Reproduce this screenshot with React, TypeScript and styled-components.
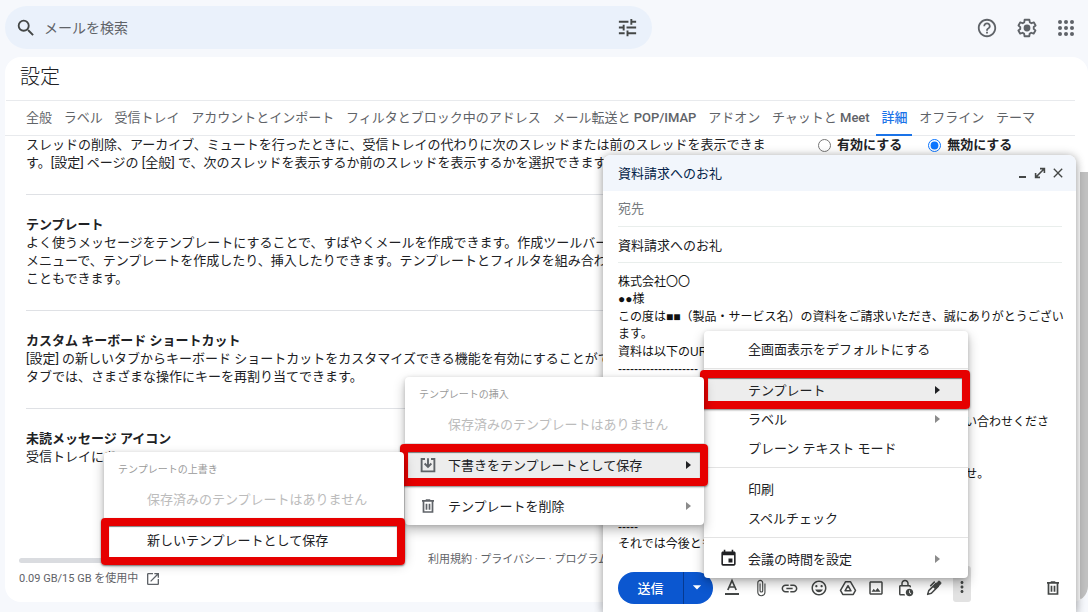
import React from "react";
import styled, { createGlobalStyle, css } from "styled-components";
import {
  MdArrowDropDown,
  MdAttachFile,
  MdClose,
  MdEvent,
  MdHelpOutline,
  MdLink,
  MdMoreVert,
  MdOpenInNew,
  MdOutlineImage,
  MdOutlineInsertEmoticon,
  MdOutlineLockClock,
  MdSearch,
  MdTune,
} from "react-icons/md";

const sans = `Roboto, "Noto Sans CJK JP", sans-serif`;
const mailSans = `"Liberation Sans", "Noto Sans CJK JP", sans-serif`;

const GlobalStyle = createGlobalStyle`
  *, *::before, *::after { box-sizing: border-box; }
  body { margin: 0; background: #f6f8fc; font-family: ${sans}; color: #202124; }
  button, input { font-family: inherit; }
  button { cursor: pointer; }
`;

const Page = styled.div`
  position: relative;
  display: flex;
  flex-direction: column;
  min-height: 100vh;
  padding: 0 0 10px 5px;
  overflow: hidden;
  font-size: 13px;
`;

/* ---------- top bar ---------- */

const TopBar = styled.header`
  display: flex;
  align-items: center;
  padding: 6px 0 8px;
`;

const SearchBox = styled.form`
  flex: 1;
  display: flex;
  align-items: center;
  gap: 7px;
  height: 43px;
  padding: 0 13px 0 10px;
  border-radius: 22px;
  background: #eaf1fb;
`;

const SearchInput = styled.input`
  flex: 1;
  min-width: 0;
  padding: 1px 0 0;
  border: 0;
  outline: 0;
  background: none;
  color: #202124;
  font-size: 14px;
  &::placeholder { color: #5f6368; opacity: 1; }
`;

const IconButton = styled.button`
  display: flex;
  align-items: center;
  justify-content: center;
  padding: 0;
  border: 0;
  background: none;
  color: #444746;
`;

const TopActions = styled.div`
  flex: 0 0 436px;
  display: flex;
  justify-content: flex-end;
  gap: 18px;
  padding-right: 10px;
  button { color: #5f6368; }
`;

/* ---------- settings panel ---------- */

const Panel = styled.main`
  position: relative;
  flex: 1;
  display: flex;
  flex-direction: column;
  border-radius: 16px;
  background: #fff;
  overflow: hidden;
  &::after {
    content: "";
    position: absolute;
    top: 115px;
    right: 0;
    bottom: 1px;
    width: 8px;
    border-radius: 0 0 8px 8px;
    background: #c1c1c1;
  }
`;

const PanelTitle = styled.h1`
  margin: 0 13px 0 1px;
  padding: 5px 14px 8px;
  border-bottom: 1px solid #e8eaed;
  font-size: 20px;
  font-weight: 300;
  line-height: 30px;
`;

const Tabs = styled.nav`
  display: flex;
  justify-content: space-between;
  margin-right: 13px;
  padding: 0 35px 0 16px;
  border-bottom: 1px solid #e8eaed;
`;

const Tab = styled.a<{ $active?: boolean }>`
  height: 35px;
  margin-bottom: -1px;
  padding: 0 5px;
  border-bottom: 2px solid ${(p) => (p.$active ? "#1a73e8" : "transparent")};
  color: ${(p) => (p.$active ? "#1a73e8" : "#5f6368")};
  font-weight: ${(p) => (p.$active ? 500 : 400)};
  line-height: 33px;
  text-decoration: none;
  white-space: nowrap;
  b { font-weight: 500; }
`;

const Sections = styled.div`
  margin: 0 26px 0 21px;
`;

const Section = styled.section`
  display: flex;
  padding: 21px 0 22px;
  line-height: 18px;
  white-space: nowrap;
  & + & { border-top: 1px solid #dfe1e5; }
  &:first-child { padding-top: 0; }
  &:last-child { padding-bottom: 0; }
`;

const SectionText = styled.div`
  flex: 1;
  min-width: 0;
  h2 { margin: 0; font-size: 13px; font-weight: 700; line-height: 18px; }
  p { margin: 0; }
`;

const Choices = styled.div`
  flex: 0 0 244px;
  display: flex;
  gap: 26px;
  align-self: flex-start;
`;

const Choice = styled.label`
  display: flex;
  align-items: center;
  gap: 6px;
  font-weight: 700;
  input { width: 13px; height: 13px; margin: 0; accent-color: #0b75ff; }
`;

const Footer = styled.footer`
  display: flex;
  margin-top: auto;
  padding: 0 14px 14px;
  color: #5f6368;
  font-size: 11px;
  line-height: 18px;
`;

const Storage = styled.div`
  flex: 0 0 409px;
  p { display: flex; align-items: center; gap: 7px; margin: 7px 0 0; }
`;

const StorageBar = styled.div`
  width: 200px;
  height: 5px;
  margin-top: 7px;
  border-radius: 3px;
  background: #dadce0;
`;

/* ---------- compose window ---------- */

const Compose = styled.section`
  position: absolute;
  right: 12px;
  bottom: 0;
  width: 473px;
  border-radius: 8px 8px 0 0;
  background: #fff;
  box-shadow: 0 4px 10px rgba(0, 0, 0, 0.2), 0 0 10px rgba(0, 0, 0, 0.25);
`;

const ComposeHeader = styled.header`
  display: flex;
  align-items: center;
  justify-content: space-between;
  height: 36px;
  padding: 0 10px 1px 15px;
  border-radius: 8px 8px 0 0;
  background: #f2f6fc;
  h2 { margin: 0; color: #041e49; font-size: 13px; font-weight: 400; }
`;

const WindowButtons = styled.div`
  display: flex;
  gap: 2px;
`;

const Field = styled.input`
  display: block;
  width: calc(100% - 29px);
  height: 36px;
  margin: 0 14px 0 15px;
  padding: 0 0 1px;
  border: 0;
  border-bottom: 1px solid #e9eeec;
  outline: 0;
  background: none;
  color: #202124;
  font-size: 13px;
  &::placeholder { color: #777b7e; opacity: 1; }
`;

const Message = styled.div`
  padding: 11px 15px 18px;
  outline: 0;
  color: #111;
  font-family: ${mailSans};
  font-size: 12px;
  line-height: 17px;
  white-space: nowrap;
  p { margin: 0 0 1px; }
`;

const ComposeBar = styled.div`
  display: flex;
  align-items: center;
  height: 32px;
  margin: 0 13px 8px 15px;
`;

const SendGroup = styled.div`
  display: flex;
  border-radius: 16px;
  overflow: hidden;
`;

const SendPart = styled.button<{ $split?: boolean }>`
  display: flex;
  align-items: center;
  justify-content: center;
  width: ${(p) => (p.$split ? 30 : 65)}px;
  height: 32px;
  padding: 0 ${(p) => (p.$split ? 3 : 0)}px 2px 0;
  border: 0;
  border-left: ${(p) => (p.$split ? "1px solid #063a91" : "0")};
  background: #0b57d0;
  color: #fff;
  font-size: 13px;
  font-weight: 500;
`;

const Tools = styled.div`
  flex: 1;
  display: flex;
  justify-content: space-between;
  margin: 0 72px 0 9px;
`;

const Tool = styled(IconButton)<{ $open?: boolean }>`
  width: 20px;
  height: 20px;
  ${(p) =>
    p.$open &&
    css`
      width: 18px;
      height: 36px;
      margin: -12px 0 -6px;
      padding-top: 6px;
      border-radius: 3px;
      background: #e2e2e2;
    `}
`;

/* ---------- menus ---------- */

const Menu = styled.div<{ $left: number; $bottom: number; $width: number; $level: number }>`
  position: absolute;
  left: ${(p) => p.$left}px;
  bottom: ${(p) => p.$bottom}px;
  z-index: ${(p) => p.$level};
  width: ${(p) => p.$width}px;
  padding: 3px 0 5px;
  border-radius: 4px;
  background: #fff;
  box-shadow: 0 5px 12px rgba(0, 0, 0, 0.28), 0 1px 4px rgba(0, 0, 0, 0.15);
`;

const MenuCaption = styled.div`
  height: 29px;
  padding-left: 14px;
  color: #9a9a9a;
  font-size: 10px;
  line-height: 30px;
`;

const MenuDivider = styled.hr`
  height: 1px;
  margin: 5px 0 6px;
  border: 0;
  background: #e3e3e3;
`;

const MenuItem = styled.button<{ $lit?: boolean }>`
  position: relative;
  display: flex;
  align-items: center;
  width: 100%;
  height: 29px;
  padding: 0 11px 0 0;
  border: 0;
  background: ${(p) => (p.$lit ? "#ededed" : "none")};
  color: #202124;
  font-size: 13px;
  text-align: left;
  white-space: nowrap;
  &:disabled { color: #bcbcbc; }
`;

const MenuIcon = styled.span<{ $wide?: boolean }>`
  flex: none;
  display: flex;
  justify-content: ${(p) => (p.$wide ? "flex-start" : "center")};
  width: ${(p) => (p.$wide ? 44 : 43)}px;
  padding-left: ${(p) => (p.$wide ? 15 : 2)}px;
  color: #5f6368;
`;

const MenuText = styled.span`
  flex: 1;
`;

const Arrow = styled.i<{ $strong?: boolean; $indent: number }>`
  width: 0;
  height: 0;
  margin-right: ${(p) => p.$indent}px;
  border: 4px solid transparent;
  border-right: 0;
  border-left: 5px solid ${(p) => (p.$strong ? "#202124" : "#8b8b8b")};
`;

const Marker = styled.span<{ $inset: string }>`
  position: absolute;
  inset: ${(p) => p.$inset};
  border: 8px solid #e60000;
  border-radius: 4px;
  box-shadow: 0 1px 2px rgba(0, 0, 0, 0.5), inset 0 1px 1px rgba(0, 0, 0, 0.5);
  pointer-events: none;
`;

/* ---------- drawn icons ---------- */

const GearIcon = () => (
  <svg width="22" height="22" viewBox="0 0 24 24" fill="none" stroke="currentColor" strokeWidth="2" strokeLinejoin="round">
    <path d="M19.300 13c.1-.7.1-1.300 0-2l2.100-1.700-2-3.500-2.600 1c-.5-.4-1.100-.8-1.700-1L14.600 3H9.400L9 5.800c-.6.2-1.200.6-1.700 1l-2.600-1-2 3.500L4.700 11c-.1.7-.1 1.300 0 2l-2.100 1.700 2 3.500 2.600-1c.5.4 1.100.8 1.700 1l.4 2.800h5.200l.4-2.800c.6-.2 1.200-.6 1.700-1l2.600 1 2-3.500z" />
    <circle cx="12" cy="12" r="3.700" fill="currentColor" stroke="none" />
  </svg>
);

const AppsIcon = () => (
  <svg width="22" height="22" viewBox="0 0 22 22" fill="currentColor">
    {[5, 11, 17].map((y) => [5, 11, 17].map((x) => <circle key={`${x}-${y}`} cx={x - 1} cy={y} r="2" />))}
  </svg>
);

const ExpandIcon = () => (
  <svg width="16" height="16" viewBox="0 0 16 16" fill="none" stroke="currentColor" strokeWidth="1.600">
    <path d="M4 12l8-8M8 3.600h4.400V8M8 12.400H3.600V8" />
  </svg>
);

const MinimizeIcon = () => (
  <svg width="16" height="16" viewBox="0 0 16 16">
    <path d="M5 11h7v2H5z" fill="currentColor" />
  </svg>
);

const TextStyleIcon = () => (
  <svg width="18" height="20" viewBox="0 0 18 20" fill="none" stroke="currentColor">
    <path d="M4.800 12L9 2.500 13.200 12M6.300 9h5.400" strokeWidth="1.700" />
    <path d="M2 16h14" strokeWidth="2" />
  </svg>
);

const DriveIcon = () => (
  <svg width="18" height="18" viewBox="0 0 24 24" fill="none" stroke="currentColor" strokeWidth="2" strokeLinejoin="round">
    <path d="M8.800 3.500h6.400L22 15.200 19 20.500H5L2 15.200z" />
    <path d="M12 9l4 6.800H8z" />
  </svg>
);

const PenIcon = () => (
  <svg width="18" height="18" viewBox="0 0 24 24" fill="none" stroke="currentColor" strokeLinejoin="round">
    <path d="M3.500 20.500l1.500-5L14.500 6.200l3.300 3.300L8.500 19z" strokeWidth="2" />
    <path d="M10.500 10.200L17.500 3.200c1.500-1.500 5 1.700 3.400 3.400L14 13.500z" fill="currentColor" strokeWidth="1" />
    <path d="M13 3.500L7 9.500" strokeWidth="2" />
  </svg>
);

const TrashIcon = () => (
  <svg width="18" height="18" viewBox="0 0 24 24" fill="none" stroke="currentColor" strokeWidth="2.300">
    <path d="M4 5.200h16M9 4h6M6 5.500v14.500h12V5.500M10 9v8M14 9v8" />
  </svg>
);

const SaveIcon = () => (
  <svg width="18" height="18" viewBox="0 0 24 24" fill="none" stroke="currentColor" strokeWidth="2.500">
    <path d="M8 4H3.500v16.500h17V4H16M12 3v11M7.500 10l4.500 4.500 4.500-4.500" />
  </svg>
);

/* ---------- content ---------- */

const tabs: { label: string; latin?: string; active?: boolean }[] = [
  { label: "全般" },
  { label: "ラベル" },
  { label: "受信トレイ" },
  { label: "アカウントとインポート" },
  { label: "フィルタとブロック中のアドレス" },
  { label: "メール転送と ", latin: "POP/IMAP" },
  { label: "アドオン" },
  { label: "チャットと ", latin: "Meet" },
  { label: "詳細", active: true },
  { label: "オフライン" },
  { label: "テーマ" },
];

const sections = [
  {
    title: "テンプレート",
    lines: [
      "よく使うメッセージをテンプレートにすることで、すばやくメールを作成できます。作成ツールバーの",
      "メニューで、テンプレートを作成したり、挿入したりできます。テンプレートとフィルタを組み合わせ",
      "こともできます。",
    ],
  },
  {
    title: "カスタム キーボード ショートカット",
    lines: [
      "[設定] の新しいタブからキーボード ショートカットをカスタマイズできる機能を有効にすることができ",
      "タブでは、さまざまな操作にキーを再割り当てできます。",
    ],
  },
  { title: "未読メッセージ アイコン", lines: ["受信トレイにあ"] },
];

const message = [
  ["株式会社〇〇", "●●様"],
  ["この度は■■（製品・サービス名）の資料をご請求いただき、誠にありがとうござい", "ます。"],
  ["資料は以下のURL", "--------------------"],
  ["", ""],
  ["資料内容について、ご不明な点がございましたら、お気軽にお問い合わせくださ", "い。"],
  ["", "送付資料のご案内と、製品・サービスに関する最新情報のお知らせ。"],
  ["", ""],
  ["-----", "それでは今後とも"],
];

export default function App() {
  return (
    <Page>
      <GlobalStyle />
      <TopBar>
        <SearchBox role="search">
          <IconButton type="button" aria-label="検索"><MdSearch size={22} /></IconButton>
          <SearchInput aria-label="メールを検索" placeholder="メールを検索" />
          <IconButton type="button" aria-label="検索オプション"><MdTune size={23} /></IconButton>
        </SearchBox>
        <TopActions>
          <IconButton aria-label="サポート"><MdHelpOutline size={22} /></IconButton>
          <IconButton aria-label="設定"><GearIcon /></IconButton>
          <IconButton aria-label="アプリ"><AppsIcon /></IconButton>
        </TopActions>
      </TopBar>

      <Panel>
        <PanelTitle>設定</PanelTitle>
        <Tabs>
          {tabs.map((t) => (
            <Tab key={t.label} href="#" $active={t.active}>
              {t.label}
              {t.latin && <b>{t.latin}</b>}
            </Tab>
          ))}
        </Tabs>
        <Sections>
          <Section>
            <SectionText>
              <p>スレッドの削除、アーカイブ、ミュートを行ったときに、受信トレイの代わりに次のスレッドまたは前のスレッドを表示できま</p>
              <p>す。[設定] ページの [全般] で、次のスレッドを表示するか前のスレッドを表示するかを選択できます。</p>
            </SectionText>
            <Choices>
              <Choice><input type="radio" name="advance" />有効にする</Choice>
              <Choice><input type="radio" name="advance" defaultChecked />無効にする</Choice>
            </Choices>
          </Section>
          {sections.map((s) => (
            <Section key={s.title}>
              <SectionText>
                <h2>{s.title}</h2>
                {s.lines.map((l) => <p key={l}>{l}</p>)}
              </SectionText>
            </Section>
          ))}
        </Sections>
        <Footer>
          <Storage>
            <StorageBar />
            <p>0.09 GB/15 GB を使用中 <MdOpenInNew size={16} /></p>
          </Storage>
          <div>利用規約 · プライバシー · プログラム</div>
        </Footer>
      </Panel>

      <Compose aria-label="新規メッセージ">
        <ComposeHeader>
          <h2>資料請求へのお礼</h2>
          <WindowButtons>
            <IconButton aria-label="最小化"><MinimizeIcon /></IconButton>
            <IconButton aria-label="全画面表示"><ExpandIcon /></IconButton>
            <IconButton aria-label="閉じる"><MdClose size={16} /></IconButton>
          </WindowButtons>
        </ComposeHeader>
        <Field aria-label="宛先" placeholder="宛先" />
        <Field aria-label="件名" defaultValue="資料請求へのお礼" />
        <Message role="textbox" aria-label="メッセージ本文" aria-multiline contentEditable suppressContentEditableWarning>
          {message.map(([a, b], i) => (
            <p key={i}>{a || "\u00a0"}<br />{b || "\u00a0"}</p>
          ))}
        </Message>
        <ComposeBar>
          <SendGroup>
            <SendPart>送信</SendPart>
            <SendPart $split aria-label="その他の送信オプション"><MdArrowDropDown size={20} /></SendPart>
          </SendGroup>
          <Tools>
            <Tool aria-label="書式設定"><TextStyleIcon /></Tool>
            <Tool aria-label="ファイルを添付"><MdAttachFile size={18} /></Tool>
            <Tool aria-label="リンクを挿入"><MdLink size={19} /></Tool>
            <Tool aria-label="絵文字を挿入"><MdOutlineInsertEmoticon size={18} /></Tool>
            <Tool aria-label="ドライブ"><DriveIcon /></Tool>
            <Tool aria-label="写真を挿入"><MdOutlineImage size={18} /></Tool>
            <Tool aria-label="情報保護モード"><MdOutlineLockClock size={18} /></Tool>
            <Tool aria-label="署名を挿入"><PenIcon /></Tool>
            <Tool $open aria-label="その他のオプション"><MdMoreVert size={18} /></Tool>
          </Tools>
          <Tool aria-label="下書きを破棄"><TrashIcon /></Tool>
        </ComposeBar>

        <Menu $left={101} $bottom={34} $width={264} $level={1}>
          <MenuItem><MenuIcon $wide /><MenuText>全画面表示をデフォルトにする</MenuText></MenuItem>
          <MenuDivider />
          <MenuItem $lit>
            <MenuIcon $wide /><MenuText>テンプレート</MenuText><Arrow $strong $indent={17} />
            <Marker $inset="-5px -2px -5px -4px" />
          </MenuItem>
          <MenuItem><MenuIcon $wide /><MenuText>ラベル</MenuText><Arrow $indent={17} /></MenuItem>
          <MenuItem><MenuIcon $wide /><MenuText>プレーン テキスト モード</MenuText></MenuItem>
          <MenuDivider />
          <MenuItem><MenuIcon $wide /><MenuText>印刷</MenuText></MenuItem>
          <MenuItem><MenuIcon $wide /><MenuText>スペルチェック</MenuText></MenuItem>
          <MenuDivider />
          <MenuItem>
            <MenuIcon $wide><MdEvent size={19} color="#202124" /></MenuIcon>
            <MenuText>会議の時間を設定</MenuText><Arrow $indent={17} />
          </MenuItem>
        </Menu>

        <Menu $left={-198} $bottom={87} $width={299} $level={2}>
          <MenuCaption>テンプレートの挿入</MenuCaption>
          <MenuItem disabled><MenuIcon /><MenuText>保存済みのテンプレートはありません</MenuText></MenuItem>
          <MenuDivider />
          <MenuItem $lit>
            <MenuIcon><SaveIcon /></MenuIcon>
            <MenuText>下書きをテンプレートとして保存</MenuText><Arrow $strong $indent={2} />
            <Marker $inset="-6px -4px -7px -5px" />
          </MenuItem>
          <MenuDivider />
          <MenuItem>
            <MenuIcon><TrashIcon /></MenuIcon>
            <MenuText>テンプレートを削除</MenuText><Arrow $indent={2} />
          </MenuItem>
        </Menu>

        <Menu $left={-499} $bottom={53} $width={300} $level={3}>
          <MenuCaption>テンプレートの上書き</MenuCaption>
          <MenuItem disabled><MenuIcon /><MenuText>保存済みのテンプレートはありません</MenuText></MenuItem>
          <MenuDivider />
          <MenuItem>
            <MenuIcon /><MenuText>新しいテンプレートとして保存</MenuText>
            <Marker $inset="-7px -1px -11px -3px" />
          </MenuItem>
        </Menu>
      </Compose>
    </Page>
  );
}
